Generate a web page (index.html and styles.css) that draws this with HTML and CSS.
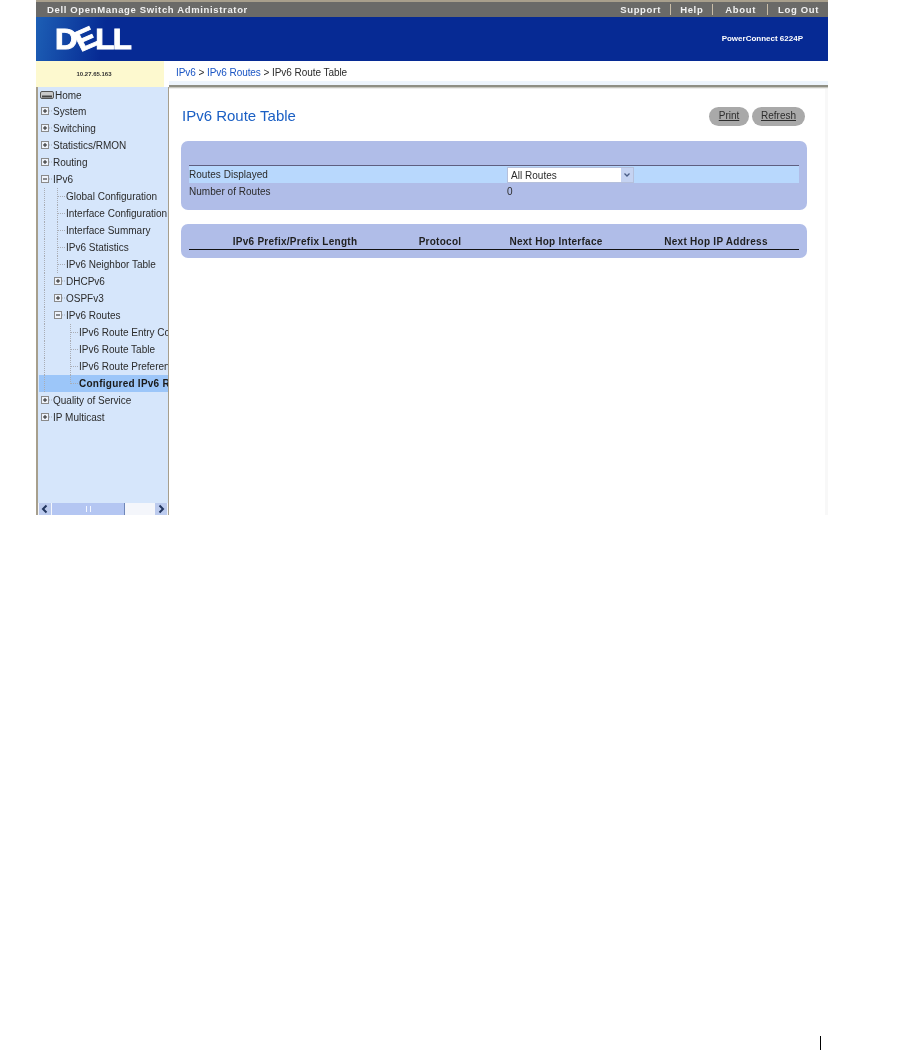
FILE: index.html
```html
<!DOCTYPE html>
<html lang="en">
<head>
<meta charset="utf-8">
<title>IPv6 Route Table</title>
<link rel="stylesheet" href="styles.css">
</head>
<body>
<svg class="defs" width="0" height="0" aria-hidden="true">
  <symbol id="plus" viewBox="0 0 13 17"><rect x="1.5" y="4.5" width="7" height="7" fill="#eef3fb" stroke="#8a8a8a"/><path d="M3 8h4M5 6v4" stroke="#222"/><path d="M9 8h4" stroke="#a9adb5" stroke-dasharray="1 1"/></symbol>
  <symbol id="minus" viewBox="0 0 13 17"><rect x="1.5" y="4.5" width="7" height="7" fill="#eef3fb" stroke="#8a8a8a"/><path d="M3 8h4" stroke="#222"/><path d="M9 8h4" stroke="#a9adb5" stroke-dasharray="1 1"/></symbol>
</svg>
<div class="app">
  <header class="topbar">
    <span class="product">Dell OpenManage Switch Administrator</span>
    <nav class="toplinks">
      <a class="toplink support">Support</a>
      <a class="toplink help">Help</a>
      <a class="toplink about">About</a>
      <a class="toplink logout">Log Out</a>
    </nav>
  </header>
  <div class="banner">
    <div class="logo">D<span class="logo-e">E</span>LL</div>
    <div class="model">PowerConnect 6224P</div>
  </div>
  <div class="workspace">
    <aside class="leftcol">
      <div class="ipbox">10.27.65.163</div>
      <div class="sidebar">
        <ul class="tree">
          <li class="row home"><svg class="homeicon" width="14" height="9" viewBox="0 0 14 9"><rect x="0.5" y="0.5" width="13" height="7" rx="1.5" fill="#c9c9c9" stroke="#555"/><path d="M2 5.5h10" stroke="#444" stroke-width="2"/></svg><span>Home</span></li>
          <li class="row"><svg class="slot"><use href="#plus"/></svg><span>System</span></li>
          <li class="row"><svg class="slot"><use href="#plus"/></svg><span>Switching</span></li>
          <li class="row"><svg class="slot"><use href="#plus"/></svg><span>Statistics/RMON</span></li>
          <li class="row"><svg class="slot"><use href="#plus"/></svg><span>Routing</span></li>
          <li class="row"><svg class="slot"><use href="#minus"/></svg><span>IPv6</span></li>
          <li class="row"><i class="gap v"></i><i class="gap vt"></i><span>Global Configuration</span></li>
          <li class="row"><i class="gap v"></i><i class="gap vt"></i><span>Interface Configuration</span></li>
          <li class="row"><i class="gap v"></i><i class="gap vt"></i><span>Interface Summary</span></li>
          <li class="row"><i class="gap v"></i><i class="gap vt"></i><span>IPv6 Statistics</span></li>
          <li class="row"><i class="gap v"></i><i class="gap vt"></i><span>IPv6 Neighbor Table</span></li>
          <li class="row"><i class="gap v"></i><svg class="slot"><use href="#plus"/></svg><span>DHCPv6</span></li>
          <li class="row"><i class="gap v"></i><svg class="slot"><use href="#plus"/></svg><span>OSPFv3</span></li>
          <li class="row"><i class="gap v"></i><svg class="slot"><use href="#minus"/></svg><span>IPv6 Routes</span></li>
          <li class="row"><i class="gap v"></i><i class="gap"></i><i class="gap vt"></i><span>IPv6 Route Entry Configuration</span></li>
          <li class="row"><i class="gap v"></i><i class="gap"></i><i class="gap vt"></i><span>IPv6 Route Table</span></li>
          <li class="row"><i class="gap v"></i><i class="gap"></i><i class="gap vt"></i><span>IPv6 Route Preference</span></li>
          <li class="row current"><i class="gap v"></i><i class="gap"></i><i class="gap lt"></i><span>Configured IPv6 Routes</span></li>
          <li class="row"><svg class="slot"><use href="#plus"/></svg><span>Quality of Service</span></li>
          <li class="row"><svg class="slot"><use href="#plus"/></svg><span>IP Multicast</span></li>
        </ul>
        <div class="hscroll">
          <div class="sbtn"><svg width="12" height="12" viewBox="0 0 12 12"><path d="M7.5 2.5 4 6l3.5 3.5" fill="none" stroke="#22365f" stroke-width="2"/></svg></div>
          <div class="thumb"><i class="grip"></i></div>
          <div class="track"></div>
          <div class="sbtn"><svg width="12" height="12" viewBox="0 0 12 12"><path d="M4.5 2.5 8 6 4.5 9.5" fill="none" stroke="#22365f" stroke-width="2"/></svg></div>
        </div>
      </div>
    </aside>
    <main class="rightcol">
      <div class="crumbs"><a>IPv6</a> &gt; <a>IPv6 Routes</a> &gt; IPv6 Route Table</div>
      <div class="rule"></div>
      <div class="content">
        <div class="titlebar">
          <h1 class="title">IPv6 Route Table</h1>
          <div class="actions">
            <a class="pill">Print</a>
            <a class="pill">Refresh</a>
          </div>
        </div>
        <section class="panel form-panel">
          <div class="form-row hilite">
            <span class="label">Routes Displayed</span>
            <span class="selectbox">All Routes<svg class="selectarrow" width="12" height="14" viewBox="0 0 12 14"><rect width="12" height="14" fill="#c5d3f2"/><path d="M3.5 5.5 6 8 8.5 5.5" fill="none" stroke="#4a5d86" stroke-width="1.3"/></svg></span>
          </div>
          <div class="form-row">
            <span class="label">Number of Routes</span>
            <span>0</span>
          </div>
        </section>
        <section class="panel table-panel">
          <div class="thead">
            <span>IPv6 Prefix/Prefix Length</span>
            <span>Protocol</span>
            <span>Next Hop Interface</span>
            <span>Next Hop IP Address</span>
          </div>
        </section>
      </div>
    </main>
  </div>
</div>
<div class="pagemark"></div>
</body>
</html>
```
FILE: styles.css
```css
* { box-sizing: border-box; }
html, body { margin: 0; padding: 0; background: #fff; }
body { font-family: "Liberation Sans", Arial, sans-serif; font-size: 10px; color: #2b2b2b; height: 1050px; overflow: hidden; }
.defs { position: absolute; }
.app { width: 792px; height: 515px; margin-left: 36px; display: flex; flex-direction: column; overflow: hidden; filter: blur(0.3px); }

.topbar { height: 17px; flex: none; background: #6a6a68; border-top: 2px solid #a89f8c; display: flex; align-items: center; padding: 0 9px 0 11px; justify-content: space-between; color: #f2f2f2; font-weight: bold; font-size: 9.5px; letter-spacing: .65px; }
.toplinks { display: flex; align-items: center; }
.toplink { height: 11px; line-height: 11px; padding: 0 9px; border-right: 1px solid #c9bda8; }
.toplink.about { padding: 0 11px 0 12px; }
.toplink.logout { border-right: 0; padding: 0 0 0 10px; }

.banner { height: 44px; flex: none; background: #062a94; display: flex; align-items: center; justify-content: space-between; padding: 0 25px 0 19px; color: #fff; background-image: linear-gradient(100deg, #1d5fb5 0, #062a94 70px); }
.logo { font-weight: bold; font-size: 29px; letter-spacing: -1.5px; line-height: 1; transform: scaleX(1.08); transform-origin: left center; -webkit-text-stroke: 0.9px #fff; }
.logo-e { display: inline-block; transform: rotate(-25deg); }
.model { font-weight: bold; font-size: 8px; margin-top: -1px; }

.workspace { flex: 1; min-height: 0; display: flex; background: #fff; }
.leftcol { width: 133px; flex: none; display: flex; flex-direction: column; }
.ipbox { height: 26px; width: 128px; flex: none; background: #fdf9cf; padding-right: 12px; text-align: center; font-size: 6px; font-weight: bold; line-height: 26px; color: #333; }
.sidebar { flex: 1; min-height: 0; background: #d6e6fb; border-left: 2px solid #a79f8d; border-right: 1px solid #a79f8d; display: flex; flex-direction: column; overflow: hidden; }
.tree { list-style: none; margin: 0; padding: 1px 0 0 1px; flex: 1; min-height: 0; overflow: hidden; }
.row { height: 17px; display: flex; align-items: center; white-space: nowrap; padding-left: 1px; }
.row.home { height: 15px; }
.row.current { background: #9cc6f9; font-weight: bold; color: #1a1a1a; letter-spacing: .25px; }
.homeicon { width: 14px; height: 9px; margin-right: 1px; flex: none; }
.slot { width: 13px; height: 17px; flex: none; }
.gap { display: block; width: 13px; height: 17px; flex: none; }
.v { background: repeating-linear-gradient(#a9adb5 0 1px, transparent 1px 2px) 4px 0 / 1px 100% no-repeat; }
.vt { background: repeating-linear-gradient(#a9adb5 0 1px, transparent 1px 2px) 4px 0 / 1px 100% no-repeat, repeating-linear-gradient(90deg, #a9adb5 0 1px, transparent 1px 2px) 5px 8px / 7px 1px no-repeat; }
.lt { background: repeating-linear-gradient(#a9adb5 0 1px, transparent 1px 2px) 4px 0 / 1px 9px no-repeat, repeating-linear-gradient(90deg, #a9adb5 0 1px, transparent 1px 2px) 5px 8px / 7px 1px no-repeat; }

.hscroll { height: 12px; flex: none; display: flex; background: #f4f6fb; padding: 0 1px; }
.sbtn { width: 12px; height: 12px; background: #bccbee; flex: none; }
.thumb { width: 73px; margin-left: 1px; background: #b4c6f2; border-right: 1px solid #6f86b8; display: flex; justify-content: center; align-items: center; }
.grip { width: 5px; height: 6px; border-left: 1px solid #f3f6ff; border-right: 1px solid #f3f6ff; }
.track { flex: 1; }

.rightcol { flex: 1; min-width: 0; display: flex; flex-direction: column; }
.crumbs { height: 24px; flex: none; padding: 0 0 0 7px; line-height: 23px; letter-spacing: -.06px; color: #2b2b2b; background: linear-gradient(#fff 20px, #eef5fd 20px); }
.crumbs a { color: #1a55c4; }
.rule { height: 4px; flex: none; background: linear-gradient(#8f8f85 0 2px, #c8c8c0 2px 3px, #eee 3px); }
.content { flex: 1; min-height: 0; padding: 0 18px 0 12px; border-right: 3px solid #f8f8f8; }
.titlebar { height: 52px; display: flex; justify-content: space-between; align-items: flex-start; }
.title { margin: 0; padding: 19px 0 0 1px; font-size: 15px; line-height: 16px; font-weight: normal; color: #1a5fc4; }
.actions { display: flex; gap: 3px; padding-top: 18px; margin-right: 2px; }
.pill { height: 19px; line-height: 18px; border-radius: 10px; background: #a9a9a9; text-decoration: underline; color: #2d2d2d; text-align: center; }
.pill:first-child { width: 40px; }
.pill:last-child { width: 53px; }

.panel { background: #b0bde8; border-radius: 7px; padding: 0 8px; }
.form-panel { height: 69px; padding-top: 24px; margin-bottom: 14px; letter-spacing: .03px; }
.form-row { display: grid; grid-template-columns: 318px 1fr; align-items: center; height: 17px; }
.form-row.hilite { height: 18px; background: #b8d8fd; border-top: 1px solid #5f5f80; }
.selectbox { position: relative; display: block; width: 127px; height: 16px; line-height: 15px; background: #fff; border: 1px solid #b5c0dc; padding-left: 3px; color: #2b2b2b; }
.selectarrow { position: absolute; right: 0; top: 0; }
.table-panel { height: 34px; padding-top: 10px; }
.thead { display: grid; grid-template-columns: 212px 78px 154px 166px; height: 16px; line-height: 15px; border-bottom: 1px solid #111; text-align: center; font-weight: bold; letter-spacing: .27px; color: #1f1f1f; }

.pagemark { width: 1px; height: 14px; margin: 521px 0 0 820px; background: #000; }
```
